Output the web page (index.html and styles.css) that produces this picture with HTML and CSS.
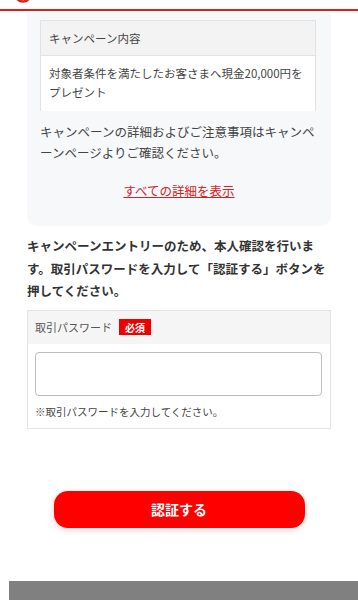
FILE: index.html
```html
<!DOCTYPE html>
<html lang="ja">
<head>
<meta charset="utf-8">
<title>キャンペーンエントリー</title>
<link rel="stylesheet" href="styles.css">
</head>
<body>
<header class="header">
  <svg class="logo" width="18" height="18" viewBox="0 0 18 18"><circle cx="9" cy="9" r="7.5" fill="none" stroke="#d9201c" stroke-width="2.5"/></svg>
</header>
<main class="main">
  <section class="card">
    <table class="info">
      <tr><th>キャンペーン内容</th></tr>
      <tr><td>対象者条件を満たしたお客さまへ現金20,000円をプレゼント</td></tr>
    </table>
    <p class="note-text">キャンペーンの詳細およびご注意事項はキャンペーンページよりご確認ください。</p>
    <p class="more"><a href="#">すべての詳細を表示</a></p>
  </section>
  <p class="lead">キャンペーンエントリーのため、本人確認を行います。取引パスワードを入力して「認証する」ボタンを押してください。</p>
  <div class="form-box">
    <div class="form-head"><span class="label">取引パスワード</span><span class="badge">必須</span></div>
    <div class="form-body">
      <input class="input" type="password">
      <p class="hint">※取引パスワードを入力してください。</p>
    </div>
  </div>
  <div class="actions"><button class="btn" type="button">認証する</button></div>
</main>
<footer class="footer"></footer>
</body>
</html>
```
FILE: styles.css
```css
* { box-sizing: border-box; }
html, body { margin: 0; padding: 0; background: #fff; }
body {
  width: 358px;
  height: 600px;
  overflow: hidden;
  font-family: "Noto Sans CJK JP", "Noto Sans", sans-serif;
  color: #333;
}
.header {
  height: 11px;
  border-bottom: 2px solid #d9201c;
  overflow: hidden;
  padding-left: 14px;
}
.logo { display: block; margin-top: -15px; }
.main { padding: 0 27px; }
.card {
  margin-top: 2px;
  background: #f7f8fa;
  border-radius: 0 0 10px 10px;
  padding: 7px 13px 25px;
}
.info {
  width: 276px;
  border-collapse: collapse;
  font-size: 11.5px;
  color: #444;
}
.info th {
  font-weight: normal;
  text-align: left;
  background: #f3f3f3;
  border: 1px solid #e2e2e2;
  height: 35px;
  padding: 0 8px;
}
.info td {
  background: #fff;
  border: 1px solid #e2e2e2;
  border-bottom: none;
  line-height: 19px;
  padding: 8px 7px 9px 8px;
  height: 55px;
  vertical-align: top;
}
.note-text {
  margin: 10px 0 0;
  font-size: 12.5px;
  line-height: 21px;
  color: #444;
}
.more {
  margin: 17px 0 0;
  text-align: center;
  font-size: 12.5px;
  line-height: 21px;
}
.more a { color: #d9201c; text-decoration: underline; }
.lead {
  margin: 9px 0 0;
  font-size: 12.5px;
  font-weight: bold;
  line-height: 22.5px;
  color: #333;
}
.form-box {
  margin-top: 7px;
  border: 1px solid #e4e4e4;
}
.form-head {
  display: flex;
  align-items: center;
  gap: 7px;
  height: 33px;
  background: #f5f5f5;
  padding: 0 7px;
  font-size: 11px;
  color: #555;
}
.badge {
  display: inline-flex;
  align-items: center;
  justify-content: center;
  width: 32px;
  height: 16px;
  background: #ee0000;
  color: #fff;
  font-size: 10px;
  font-weight: bold;
}
.form-body { padding: 8px 7px 8px; background: #fff; }
.input {
  display: block;
  width: 287px;
  height: 44px;
  border: 1px solid #bdbdbd;
  border-radius: 4px;
  background: #fff;
}
.hint {
  margin: 8px 0 0;
  font-size: 10.5px;
  line-height: 16px;
  color: #444;
}
.actions { display: flex; justify-content: center; margin-top: 62px; }
.btn {
  width: 251px;
  height: 37px;
  border: none;
  border-radius: 14px;
  background: #ff0000;
  color: #fff;
  font-family: inherit;
  font-size: 14px;
  font-weight: bold;
  box-shadow: 0 2px 6px rgba(255, 0, 0, 0.18);
}
.footer {
  margin: 53px 0 0 9px;
  height: 30px;
  background: #808080;
}
```
